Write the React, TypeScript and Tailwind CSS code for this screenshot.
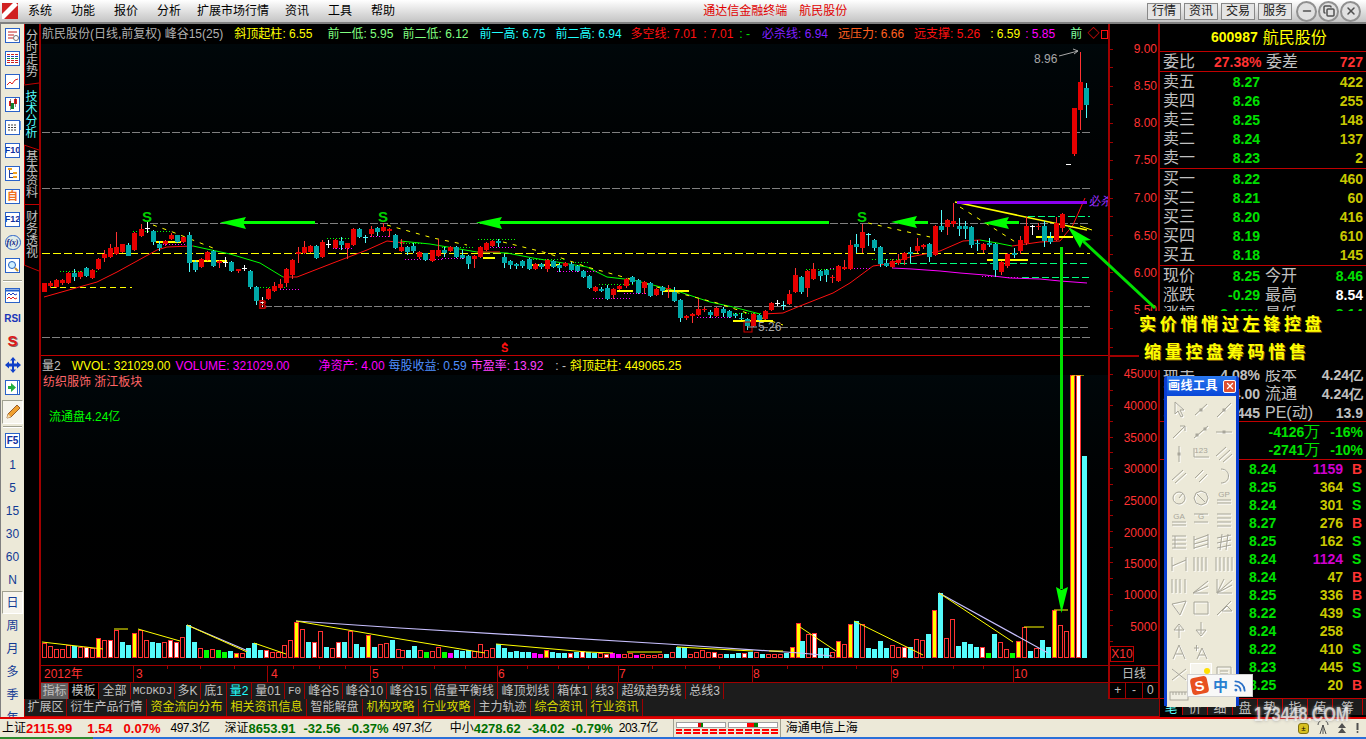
import React from "react";
import { Minus, Copy, X, Rss } from "lucide-react";

// candles: x, body top, body bottom, wick top, wick bottom, kind (0 red, 1 teal, 2 white, 3 cyan cross)
const candles: number[][] = [
  [44,283,292,283,292,0],[50,283,286,281,288,0],[56,280,287,279,288,0],[62,280,283,279,285,0],[68,273,283,272,284,0],
  [74,273,277,269,281,1],[80,272,277,271,279,0],[86,268,276,267,277,1],[92,270,278,269,279,0],[98,259,269,258,270,0],
  [104,254,258,250,262,0],[110,248,257,244,258,0],[116,247,254,232,255,0],[122,244,252,244,253,0],[128,245,256,243,256,1],
  [134,233,250,232,251,0],[141,229,236,224,237,0],[147,228,228,222,233,2],[153,231,242,230,245,1],[159,244,248,241,251,1],
  [165,241,244,240,246,0],[171,235,239,233,240,0],[177,235,242,235,243,1],[183,237,242,237,243,0],[189,235,263,232,272,1],
  [195,262,270,260,272,1],[201,259,267,258,268,0],[207,252,260,251,261,0],[213,251,266,250,267,1],[219,261,263,260,268,0],
  [225,262,262,257,267,2],[231,262,271,261,272,1],[238,269,271,269,273,0],[244,268,268,265,271,2],[250,271,287,270,289,1],
  [256,287,301,286,305,1],[262,302,302,297,307,2],[268,289,299,288,300,0],[274,286,291,282,292,0],[280,284,288,279,289,0],
  [286,269,283,268,287,0],[292,260,275,259,279,0],[298,252,254,247,263,0],[304,247,253,241,254,0],[310,246,252,245,253,0],
  [316,246,258,245,259,1],[322,242,257,240,258,0],[328,244,244,240,248,2],[335,240,248,239,249,0],[341,241,245,237,250,1],
  [347,243,248,243,259,0],[353,229,245,228,246,0],[359,229,237,228,238,1],[365,237,237,235,243,3],[371,229,234,226,237,0],
  [377,228,232,227,236,1],[383,227,231,223,232,0],[389,229,231,228,237,0],[395,235,248,234,249,1],
  [401,247,251,239,252,0],[407,247,252,246,255,1],[413,246,251,243,253,1],[419,252,257,251,259,0],[425,253,260,253,261,1],
  [432,250,261,250,262,0],[438,250,256,239,257,0],[444,250,253,247,257,1],[450,247,251,246,252,0],[456,247,257,246,258,1],
  [462,255,258,250,259,1],[468,256,264,255,269,1],[474,256,259,255,268,0],[480,247,257,246,258,0],[486,243,250,242,251,0],
  [492,241,246,240,247,0],[498,241,243,239,247,1],[504,257,263,254,268,1],[510,261,265,260,269,1],[516,264,266,263,269,1],
  [522,261,266,260,268,1],[529,259,269,258,270,1],[535,264,269,263,270,0],[541,264,267,263,269,1],[547,260,269,259,272,0],
  [553,261,267,260,268,1],[559,265,268,263,272,1],[565,263,266,262,267,0],[571,264,270,262,271,1],[577,266,271,265,272,1],
  [583,271,277,270,278,1],[589,276,288,275,289,1],[595,287,291,286,292,0],[601,289,291,287,292,1],[607,288,299,285,300,1],
  [613,289,295,288,299,0],[619,286,289,285,290,0],[626,279,286,278,288,0],[632,277,282,276,284,1],[638,280,293,279,294,1],
  [644,282,288,281,294,0],[650,283,296,282,297,1],[656,289,295,288,296,0],[662,287,291,286,295,1],[668,288,288,285,298,0],
  [674,292,301,287,302,1],[680,300,318,299,322,1],[686,316,318,315,320,0],[692,314,316,313,323,0],[698,309,315,299,316,0],
  [704,309,309,307,312,0],[710,312,315,310,318,1],[716,308,316,307,317,0],[723,309,313,307,317,1],[729,311,317,310,318,1],
  [735,314,316,313,318,1],[741,318,318,313,320,1],[747,319,326,318,330,1],[753,314,326,313,327,0],[759,315,320,314,321,1],
  [765,311,319,310,320,0],[771,303,310,302,311,0],[777,303,303,300,306,2],[783,305,305,301,310,3],[789,294,304,290,305,0],
  [795,275,292,268,293,0],[801,277,292,276,294,1],[807,271,288,270,297,0],[813,269,279,263,280,0],[820,271,276,270,281,1],
  [826,270,275,269,282,1],[832,277,277,275,283,0],[838,266,281,265,282,0],[844,267,269,260,270,0],[850,245,269,240,270,0],
  [856,244,247,234,253,1],[862,232,248,224,253,0],[868,234,234,233,246,3],[874,240,248,239,251,1],[880,247,264,246,267,1],
  [886,263,266,259,267,1],[892,261,267,259,268,0],[898,260,263,254,265,0],[904,253,260,252,265,0],[910,252,254,247,263,1],
  [917,246,251,238,253,0],[923,245,247,244,249,0],[929,244,257,243,262,1],[935,226,255,225,256,0],[941,226,230,210,232,1],
  [947,220,227,219,235,0],[953,221,224,203,227,0],[959,226,229,218,236,1],[965,226,229,221,239,1],[971,227,245,226,248,1],
  [977,243,244,240,251,1],[983,244,250,243,253,0],[989,243,245,238,247,1],[995,244,270,243,277,1],[1001,262,272,261,275,0],
  [1007,254,266,253,268,0],[1014,253,255,248,258,1],[1020,240,251,236,254,0],[1026,226,243,217,245,0],[1032,226,226,225,235,2],
  [1038,226,227,223,230,0],[1044,226,241,221,247,1],[1050,238,242,232,244,1],[1056,223,240,217,241,0],[1062,214,228,213,232,0],
  [1068,164,164,164,164,2],[1074,108,154,108,156,0],[1080,82,110,52,130,0],[1086,88,105,83,118,1],
];

const volumes: [number, string][] = [
  [42, "R15 R12 R9 R9 R13 C12 R11 W11 R10 Y20 R18 W18 R28 C16 C13 Y25 R28 R18 C16 C15 R16 W18 W16 R21 C33 C16 R10 G8 R9 G8 G6 C7 Y5 R5 C10 C15 C8 W8 R6 R6 R13 R18 Y36 R29 C16 W16 R27 C11 R10 W16 C16 R27 C14 C11 Y23 C11 R14 R15 C18 R9"],
  [400, "R8 C8 C12 R8 G6 R7 R11 G6 M5 C8 C7 C8 R7 R14 R8 R10 C14 C10 C6 C7 C6 C6 M5 M4 Y8 C6 C5 C5 W5 C6 W7 C6 C5 R5 W4 M5 M4 R4 R5 M3 R4 R3 R3 R4 C4 R6 C11 C11 R4 R6 R8 R6 W6 R4 C4 C4 C5 W5 C6 R6 C4 R4 R4 R4 C5 Y11 Y35"],
  [800, "C17 R24 W25 C10 C10 R6 Y17 R14 Y34 C37 R34 C10 C9 C17 C10 R13 R11 W11 C11 R19 R18 C24 Y48 C65 R20 R39 C12 C16 C14 C11 W11 G5 C24 R16 R9 G5 Y17 R31 C7 R10 C18 C11 Y48 R33 R27 Y283 W283 C202"],
];

// x1,x2,y of the short dotted support lines, green then magenta
const greenDots = [[133,172,231],[327,353,238],[60,97,271],[260,287,287],[400,423,243],[442,473,247],[478,517,239],[533,565,259],[575,590,262],[599,633,284],[733,763,313],[806,837,269],[872,907,259]];
const pinkDots = [[163,187,244],[333,353,248],[370,390,236],[280,299,289],[405,443,259],[442,475,258],[490,517,247],[557,597,271],[593,632,298],[624,647,293],[697,733,317],[830,870,268],[982,993,276],[1005,1020,277]];
const thickYellow = [[156,181,241],[483,495,257],[532,560,264],[617,633,290],[663,689,290],[733,773,320],[192,227,260],[987,1028,259],[1036,1073,236]];

const menu: [string, number][] = [["系统",0],["功能",19],["报价",19],["分析",19],["扩展市场行情",16],["资讯",16],["工具",19],["帮助",19]];

const indicatorTabs: [string, number, string?][] = [
  ["指标",28,"sel"],["模板",30,"blk"],["全部",32],["MCDKDJ",44,"mono"],["多K",26],["底1",26],["量2",25,"cy"],["量01",33],["F0",20,"mono"],["峰谷5",38],["峰谷10",44],["峰谷15",44],["倍量平衡线",67],["峰顶划线",56],["箱体1",38],["线3",26],["超级趋势线",68],["总线3",38],
];
const bottomTabs: [string, number, boolean][] = [
  ["扩展区",43,false],["衍生产品行情",80,false],["资金流向分布",80,true],["相关资讯信息",80,true],["智能解盘",56,false],["机构攻略",56,true],["行业攻略",56,true],["主力轨迹",56,false],["综合资讯",56,true],["行业资讯",56,true],
];

const asks = [["卖五","8.27","422"],["卖四","8.26","255"],["卖三","8.25","148"],["卖二","8.24","137"],["卖一","8.23","2"]];
const bids = [["买一","8.22","460"],["买二","8.21","60"],["买三","8.20","416"],["买四","8.19","610"],["买五","8.18","145"]];
const ticks = [["8.24","1159","B"],["8.25","364","S"],["8.24","301","S"],["8.27","276","B"],["8.25","162","S"],["8.24","1124","S"],["8.24","47","B"],["8.25","336","B"],["8.22","439","S"],["8.24","258",""],["8.22","410","S"],["8.23","445","S"],["8.25","20","B"]];

const NUM = "font-['Liberation_Sans',sans-serif] font-bold text-[14px] leading-none";

function Candles() {
  return (
    <>
      {candles.map(([x, t, b, h, l, k], i) => {
        const body = k === 0 ? "#e60000" : k === 1 ? "#00a8a8" : k === 2 ? "#ffffff" : "#54fcfc";
        const wick = k === 0 ? "#ff3232" : k === 1 ? "#54fcfc" : body;
        return (
          <g key={i}>
            <rect x={x} y={h} width={1} height={Math.max(l - h, 1)} fill={wick} />
            <rect x={x - 2} y={t} width={5} height={Math.max(b - t, 1)} fill={body} />
          </g>
        );
      })}
    </>
  );
}

function PriceChart() {
  return (
    <svg width={1067} height={311} viewBox="41 44 1067 311" shapeRendering="crispEdges" className="block">
      {[132, 188].map((y) => <line key={y} x1={42} x2={1090} y1={y + 0.5} y2={y + 0.5} stroke="#808080" strokeDasharray="8 2" />)}
      <line x1={150} x2={1090} y1={223.5} y2={223.5} stroke="#808080" strokeDasharray="8 2" />
      <line x1={264} x2={1090} y1={306.5} y2={306.5} stroke="#808080" strokeDasharray="8 2" />
      <line x1={760} x2={1090} y1={327.5} y2={327.5} stroke="#808080" strokeDasharray="8 2" />
      <line x1={42} x2={1090} y1={337.5} y2={337.5} stroke="#808080" strokeDasharray="8 2" />
      <line x1={50} x2={132} y1={287.5} y2={287.5} stroke="#ffff00" strokeDasharray="6 4" />
      <line x1={42} x2={1090} y1={253.5} y2={253.5} stroke="#ffff00" strokeDasharray="8 3" />
      <line x1={890} x2={1090} y1={263.5} y2={263.5} stroke="#00ff80" strokeDasharray="7 3" />
      <line x1={1022} x2={1090} y1={277.5} y2={277.5} stroke="#00ff80" strokeDasharray="7 3" />
      <line x1={1028} x2={1090} y1={216.5} y2={216.5} stroke="#00ff80" strokeDasharray="7 3" />

      <g fill="none" shapeRendering="auto">
        <polyline points="44,297 97,282 117,272 157,250 167,247 193,246" stroke="#ff1010" />
        <polyline points="193,246 230,254 260,263 283,277" stroke="#00ff00" />
        <polyline points="283,277 297,277 333,263 367,250 387,241 405,243" stroke="#ff1010" />
        <polyline points="400,241 430,244 477,252 507,253 533,258 587,267 607,277 633,280 653,285 680,292 710,302 733,307 760,314" stroke="#00ff00" />
        <polyline points="477,252 500,252" stroke="#ff1010" />
        <polyline points="763,314 783,313 800,306 833,293 850,283 873,266 887,264 910,257 940,251 963,241 980,240" stroke="#ff1010" />
        <polyline points="980,240 997,243 1012,246" stroke="#00ff00" />
        <polyline points="1012,246 1040,242 1060,241 1073,225 1085,198" stroke="#ff1010" />
        <polyline points="892,268 912,269 940,271 960,273 985,275 1010,278 1040,279 1060,281 1087,283" stroke="#ff00ff" />
        <polyline points="153,225 170,231 213,248" stroke="#ffff00" strokeDasharray="4 6" />
        <polyline points="387,225 433,238 467,245" stroke="#ffff00" strokeDasharray="4 6" />
        <polyline points="503,242 547,253 587,267 627,278 667,290 717,303 783,325" stroke="#ffff00" strokeDasharray="4 6" />
        <polyline points="868,223 930,237" stroke="#ffff00" strokeDasharray="4 6" />
        <polyline points="960,207 1017,243" stroke="#ffff00" strokeDasharray="4 6" />
        <polyline points="955,202 1087,230" stroke="#ffff00" strokeWidth={1.5} />
        <polyline points="1080,226 1092,230" stroke="#ffff00" />
      </g>

      {greenDots.map(([a, b, y], i) => <line key={i} x1={a} x2={b} y1={y + 0.5} y2={y + 0.5} stroke="#00ff00" strokeDasharray="1 2" />)}
      {pinkDots.map(([a, b, y], i) => <line key={i} x1={a} x2={b} y1={y + 0.5} y2={y + 0.5} stroke="#ff00ff" strokeDasharray="1 2" />)}
      {thickYellow.map(([a, b, y], i) => <rect key={i} x={a} y={y} width={b - a} height={2} fill="#ffff00" />)}
      <rect x={957} y={201} width={130} height={3} fill="#8a00f0" />

      <Candles />

      <g className="font-['Liberation_Sans',sans-serif] font-bold" fontSize={15} fill="#00d000" shapeRendering="auto">
        <text x={142} y={222}>S</text>
        <text x={378} y={222}>S</text>
        <text x={857} y={222}>S</text>
      </g>
      <g className="font-['Liberation_Sans',sans-serif]" fontSize={12} shapeRendering="auto">
        <text x={258} y={309} fill="#c00000" fontWeight="bold">B</text>
        <rect x={744} y={322} width={8} height={10} fill="none" stroke="#d00000" />
        <text x={758} y={331} fill="#a8a8a8">5.26</text>
        <line x1={747} x2={757} y1={327} y2={327} stroke="#a8a8a8" />
        <text x={1034} y={63} fill="#a8a8a8">8.96</text>
        <path d="M1059 56 L1078 51 M1073 49 L1078 51 L1074 54" fill="none" stroke="#a8a8a8" />
        <text x={501} y={352} fill="#ff1010" fontWeight="bold" fontSize={11}>S</text>
        <path d="M505 342 l-3 3 h6 z" fill="#ff1010" />
        <text x={1089} y={205} fill="#9a30ff" fontSize={12}>必杀线</text>
      </g>
    </svg>
  );
}

function VolumeChart() {
  const bars: React.ReactElement[] = [];
  volumes.forEach(([start, list]) => {
    list.split(" ").forEach((v, i) => {
      const k = v[0];
      const h = Number(v.slice(1));
      const x = start + 6 * i;
      const y = 658 - h;
      if (k === "C" || k === "G" || k === "M") {
        bars.push(<rect key={`${start}${i}`} x={x} y={y} width={5} height={h} fill={k === "C" ? "#54fcfc" : k === "G" ? "#00ff00" : "#ff00ff"} />);
      } else {
        const fill = k === "Y" ? "#ffff00" : k === "W" ? "#ffffff" : "none";
        bars.push(<rect key={`${start}${i}`} x={x + 0.5} y={y + 0.5} width={4} height={h - 1} fill={fill} stroke="#ff3232" />);
      }
    });
  });
  const yellow = ["42,642 103,649","114,629 128,629","138,629 180,641","187,625 247,652","254,643 286,654","296,621 400,639 485,653","496,644 587,652 613,653","627,652 662,652","677,647 753,651","769,651 783,651","800,627 836,651","854,621 923,655","939,593 1013,642","1024,627 1044,627","1054,610 1068,610","1072,375 1084,375"];
  const lavender = ["187,625 248,651","296,621 400,628 667,644 800,653 832,656","939,593 1048,653"];
  const fullTicks = [133, 267, 370, 497, 618, 752, 891, 1013];
  const smallTicks = [167, 200, 234, 293, 319, 345, 402, 434, 465, 527, 558, 588, 652, 685, 719, 787, 822, 856, 922, 953, 983];
  const months: [string, number][] = [["3",136],["4",271],["5",372],["6",498],["7",619],["8",753],["9",892],["10",1014]];
  return (
    <svg width={1067} height={307} viewBox="41 375 1067 307" shapeRendering="crispEdges" className="block">
      {bars}
      <g fill="none" shapeRendering="auto">
        {lavender.map((p) => <polyline key={p} points={p} stroke="#c8c0ff" strokeWidth={1.2} />)}
        {yellow.map((p) => <polyline key={p} points={p} stroke="#ffff00" />)}
      </g>
      <rect x={41} y={665} width={1067} height={1} fill="#a00000" />
      {fullTicks.map((x) => <rect key={x} x={x} y={666} width={1} height={16} fill="#a00000" />)}
      {smallTicks.map((x) => <rect key={x} x={x} y={666} width={1} height={3} fill="#a00000" />)}
      <g className="font-['Liberation_Sans','Noto_Sans_CJK_SC',sans-serif]" fontSize={12} shapeRendering="auto">
        <text x={44} y={678} fill="#ff3232">2012年</text>
        {months.map(([m, x]) => <text key={m} x={x} y={678} fill="#ff3232">{m}</text>)}
        <text x={43} y={386} fill="#ff6464">纺织服饰 浙江板块</text>
        <text x={49} y={421} fill="#00ff00">流通盘4.24亿</text>
      </g>
    </svg>
  );
}

function PriceAxis() {
  const priceLabels: [string, number][] = [["9.00",48.5],["8.50",85.7],["8.00",122.7],["7.50",160],["7.00",197.7],["6.50",235.7],["6.00",272.5],["5.50",310]];
  const volLabels: [string, number][] = [["45000",374],["40000",406],["35000",438],["30000",469],["25000",501],["20000",533],["15000",564],["10000",595],["5000",627]];
  const ticks: number[] = [];
  for (let y = 48.5; y < 354; y += 18.65) ticks.push(Math.round(y));
  const vTicks: number[] = [];
  for (let y = 374; y < 650; y += 15.7) vTicks.push(Math.round(y));
  return (
    <svg width={50} height={641} viewBox="1108 24 50 641" shapeRendering="crispEdges" className="block">
      <rect x={1108} y={24} width={2} height={641} fill="#a00000" />
      {ticks.map((y) => <rect key={y} x={1108} y={y} width={5} height={1} fill="#a00000" />)}
      {vTicks.map((y) => <rect key={y} x={1108} y={y} width={5} height={1} fill="#a00000" />)}
      <rect x={1108} y={355} width={50} height={1} fill="#c00000" />
      <rect x={1108} y={355} width={32} height={2} fill="#a00000" />
      <g className="font-['Liberation_Sans',sans-serif]" fontSize={12} fill="#ff3232" textAnchor="end" shapeRendering="auto">
        {priceLabels.map(([t, y]) => <text key={t} x={1157} y={y + 4}>{t}</text>)}
        {volLabels.map(([t, y]) => <text key={t} x={1157} y={y + 4}>{t}</text>)}
        <text x={1122} y={658} textAnchor="middle" fontSize={12}>X10</text>
      </g>
      <rect x={1110.5} y={646.5} width={23} height={15} fill="none" stroke="#c00000" />
    </svg>
  );
}

function Legend({ label, value, color, className }: { label: string; value: string; color: string; className?: string }) {
  return (
    <span className={`whitespace-pre ${className ?? ""}`} style={{ color }}>
      {label}: {value}
    </span>
  );
}

// left toolbar icon box with a blue frame
function Box({ children, className }: { children?: React.ReactNode; className?: string }) {
  return (
    <div className={`w-[15px] h-[15px] border border-[#2a62c8] bg-white flex items-center justify-center overflow-hidden text-[9px] font-bold leading-none text-[#1030a0] ${className ?? ""}`}>
      {children}
    </div>
  );
}

function LeftBar() {
  const slot = "h-[23px] flex items-center justify-center shrink-0";
  const period = "h-[23px] flex items-center justify-center shrink-0 text-[#123a94] text-[12px]";
  return (
    <div className="w-[24px] shrink-0 bg-[#ece9d8] border-l border-[#808080] flex flex-col overflow-hidden">
      <div className={slot}>
        <Box><svg width={13} height={13}><path d="M2 3h9M2 6h6M2 9h5" stroke="#c02020" /><circle cx={10} cy={9} r={2.5} fill="none" stroke="#707070" /></svg></Box>
      </div>
      <div className={slot}>
        <Box><svg width={13} height={13} shapeRendering="crispEdges"><path d="M1 2h11M1 10h11" stroke="#d02020" strokeDasharray="3 1" /><path d="M1 4h11" stroke="#2040c0" strokeDasharray="3 1" /><path d="M1 6h11" stroke="#108040" strokeDasharray="3 1" /><path d="M1 8h11" stroke="#d02020" strokeDasharray="3 1" /></svg></Box>
      </div>
      <div className={slot}>
        <Box><svg width={13} height={13}><path d="M1 10l3-3 2 2 3-4 3-1" fill="none" stroke="#e02020" /></svg></Box>
      </div>
      <div className={slot}>
        <Box><svg width={13} height={13} shapeRendering="crispEdges"><path d="M3 3h2v5h-2zM8 1h3v5h-3z" fill="#e02020" /><path d="M5 5h3v6h-3z" fill="#108030" /><path d="M4 1v11M9.500 0v9" stroke="#222" strokeWidth={0.5} /></svg></Box>
      </div>
      <div className={slot}>
        <div className="relative w-[16px] h-[14px]">
          <div className="absolute right-0 top-0 w-[13px] h-[9px] border border-[#6090e0] bg-[#a0c0f0]" />
          <Box className="absolute left-0 bottom-0 w-[13px] h-[11px]"><svg width={11} height={9}><path d="M1 2h9M1 4.500h9M1 7h9" stroke="#404040" strokeDasharray="2 1" /></svg></Box>
        </div>
      </div>
      <div className={slot}><Box>F10</Box></div>
      <div className={slot}>
        <Box><svg width={13} height={13} shapeRendering="crispEdges"><path d="M2 1h4v2h-4zM7 5h4v2h-4zM7 9h4v2h-4z" fill="#f0a020" /><path d="M3 3v7h4M3 6h4" fill="none" stroke="#2040a0" /></svg></Box>
      </div>
      <div className={slot}><Box className="text-[#f07020] text-[11px]">自</Box></div>
      <div className={slot}><Box>F12</Box></div>
      <div className={slot}><div className="w-[16px] h-[15px] rounded-full border border-[#2a62c8] bg-[#e0ece8] flex items-center justify-center text-[8px] italic font-bold text-[#102080] font-['Liberation_Serif',serif]">f(x)</div></div>
      <div className={slot}>
        <Box><svg width={13} height={13}><circle cx={6} cy={6} r={3.5} fill="#d0f0ff" stroke="#2060c0" /><path d="M9 9l3 3" stroke="#c09030" strokeWidth={2} /></svg></Box>
      </div>
      <div className="h-[7px] flex items-center justify-center shrink-0"><div className="w-[19px] border-t border-[#a0a090] border-b-white border-b h-[2px]" /></div>
      <div className={slot}>
        <Box><svg width={13} height={13}><path d="M0 1.500h13" stroke="#2060d0" strokeWidth={2} /><path d="M1 6l2-2 2 2 2-2 2 2 2-1" fill="none" stroke="#2040c0" /><path d="M1 10l2-2 2 2 2-2 2 2 2-1" fill="none" stroke="#e02020" /></svg></Box>
      </div>
      <div className={`${slot} text-[#1834b8] text-[10px] font-bold font-['Liberation_Sans',sans-serif]`}>RSI</div>
      <div className={`${slot} text-[#e01818] text-[15px] font-bold font-['Liberation_Sans',sans-serif] [text-shadow:1px_1px_0_#806060]`}>S</div>
      <div className={slot}>
        <svg width={16} height={16} viewBox="0 0 16 16"><path d="M8 0l3 3.500h-2v3h3v-2l4 3.500-4 3.500v-2h-3v3h2l-3 3.500-3-3.500h2v-3h-3v2l-4-3.500 4-3.500v2h3v-3h-2z" fill="#1040c8" /></svg>
      </div>
      <div className={slot}>
        <Box><svg width={13} height={13}><path d="M2 5h3v-3l5 4.500-5 4.500v-3h-3z" fill="#20b040" /><path d="M11.500 0v13" stroke="#2a62c8" /></svg></Box>
      </div>
      <div className="h-[24px] mt-[1px] mx-[1px] flex items-center justify-center shrink-0 bg-[#f6f4ec] border border-t-[#a0a090] border-l-[#a0a090] border-b-white border-r-white">
        <svg width={16} height={16} viewBox="0 0 16 16"><path d="M12 1l3 3-9 9-4 1 1-4z" fill="#f0a030" stroke="#804010" strokeWidth={0.8} /><path d="M2 14l1-4 3 3z" fill="#f8e0b0" /></svg>
      </div>
      <div className="h-[5px] flex items-center justify-center shrink-0"><div className="w-[19px] border-t border-[#a0a090] border-b-white border-b h-[2px]" /></div>
      <div className={slot}><Box className="text-[10px]">F5</Box></div>
      <div className="h-[1px] shrink-0" />
      {["1", "5", "15", "30", "60", "N"].map((p) => <div key={p} className={`${period} font-['Liberation_Sans',sans-serif]`}>{p}</div>)}
      <div className="h-[23px] mx-[1px] flex items-center justify-center shrink-0 bg-[#f6f4ec] border border-t-[#a0a090] border-l-[#a0a090] border-b-white border-r-white text-[#123a94] text-[12px]">日</div>
      {["周", "月", "多", "季", "年"].map((p) => <div key={p} className={period}>{p}</div>)}
    </div>
  );
}

function TabStrip() {
  const tabs: [string, number, string][] = [
    ["分时走势", 60, "text-[#c0c0c0] border-l"],
    ["技术分析", 61, "text-[#54fcfc]"],
    ["基本资料", 60, "text-[#c0c0c0] border-l border-b"],
    ["财务透视", 60, "text-[#c0c0c0] border-l"],
  ];
  return (
    <div className="relative w-[17px] shrink-0 bg-black border-r-2 border-[#a00000] flex flex-col">
      {tabs.map(([t, h, cls]) => (
        <div key={t} style={{ height: h }} className={`flex flex-col items-center justify-center shrink-0 text-[12px] leading-[12px] border-[#c00000] ${cls}`}>
          {t.split("").map((c, j) => <span key={j}>{c}</span>)}
        </div>
      ))}
      {/* chamfered corners of the tabs */}
      <svg width={17} height={260} className="absolute left-0 top-0 pointer-events-none">
        <path d="M0 61L15 59M0 121L15 126M0 241L15 247" fill="none" stroke="#c00000" />
      </svg>
    </div>
  );
}

function ToolIcon({ d, label, dots }: { d?: string; label?: string; dots?: number[][] }) {
  return (
    <svg width={20} height={20} viewBox="0 0 20 20" className="block">
      <g fill="none">
        {d && <path d={d} stroke="#ffffff" transform="translate(1 1)" />}
        {d && <path d={d} stroke="#a8a69a" />}
        {dots?.map(([x, y], i) => <rect key={i} x={x - 1.5} y={y - 1.5} width={3} height={3} fill="#a8a69a" />)}
      </g>
      {label && <text x={10} y={9} textAnchor="middle" fontSize={8} fill="#a8a69a" className="font-['Liberation_Sans',sans-serif]">{label}</text>}
    </svg>
  );
}

const toolRows: { d?: string; label?: string; dots?: number[][] }[][] = [
  [{ d: "M6 2v12l3-3 3 6 2-1-3-6h4z" }, { d: "M4 15L16 4", dots: [[10, 10]] }, { d: "M3 17L17 3", dots: [[10, 10]] }],
  [{ d: "M4 16L16 4M11 4h5v5" }, { d: "M3 16L17 4", dots: [[6, 13], [14, 7]] }, { d: "M2 10h16", dots: [[10, 10]] }],
  [{ d: "M10 2v16", dots: [[10, 10]] }, { d: "M3 13h15M3 4v9", label: "123" }, { d: "M2 12L12 3M5 16L16 6M9 18L18 10" }],
  [{ d: "M3 14L14 4M6 17L17 7" }, { d: "M4 12L12 4M8 16L16 8" }, { d: "M7 3c10 0 10 14 0 14" }],
  [{ d: "M16 10a6 6 0 1 1-12 0 6 6 0 1 1 12 0M10 10L14 5" }, { d: "M5 5l5-2 5 2 2 5-2 5-5 2-5-2-2-5zM6 6l8 8" }, { d: "M3 12h14M3 15h14", label: "GP" }],
  [{ d: "M3 12h14M3 15h14", label: "GA" }, { d: "M3 4h14M3 12h14", label: "G" }, { d: "M3 4h14M3 8h14M3 12h14M3 16h14" }],
  [{ d: "M3 4h14M3 8h14M3 12h14M3 16h14M6 4v12" }, { d: "M3 4v13M17 2v14M3 8L17 3M3 12L17 8M3 16L17 12" }, { d: "M3 6L17 3M3 11L17 8M3 16L17 13M8 2l-2 16M14 2l-2 16" }],
  [{ d: "M3 3v14M17 3v14M3 12L17 6" }, { d: "M3 3v14M7 3v14M11 3v14M15 3v14" }, { d: "M2 3v14M6 3v14M10 3v14M14 3v14M18 3v14" }],
  [{ d: "M3 3v14M7 3v14M11 3v14M16 3v14" }, { d: "M2 17L17 5M2 17L17 10M2 17h15" }, { d: "M3 3v14h15M3 17L18 4M3 17L18 9M3 17L10 3" }],
  [{ d: "M3 6L17 3 11 17z" }, { d: "M3 4h14v12H3z" }, { d: "M3 17L17 3M8 13h10l-5-5z" }],
  [{ d: "M10 18V6M5 10l5-6 5 6z" }, { d: "M10 2v12M5 10l5 6 5-6z" }, {}],
  [{ d: "M4 17l6-14 6 14M6.500 12h7" }, { d: "M6 17l5-11 5 11M8 13h6M3 6h5M5.500 3v6" }, {}],
  [{ d: "M3 5l14 11M17 5L3 16" }, {}, { d: "M3 3h14v14H3zM6 7h8M6 10h8M6 13h8" }],
];

function DrawingTools() {
  return (
    <div className="absolute left-[1164px] top-[376px] w-[75px] h-[330px] z-30 bg-[#0a3ed0] rounded-t-[3px] border-[3px] border-t-0 border-[#0a3ed0] flex flex-col">
      <div className="h-[20px] flex items-center justify-between shrink-0 pl-[1px] bg-linear-to-b from-[#2a78f0] to-[#0a46d8]">
        <span className="text-white text-[12px] font-bold leading-none tracking-[0.5px]">画线工具</span>
        <span className="w-[13px] h-[13px] bg-[#e05030] border border-white rounded-[2px] flex items-center justify-center"><X size={10} color="white" strokeWidth={3} /></span>
      </div>
      <div className="bg-[#ece9d8] flex-1 grid grid-cols-3 auto-rows-[22px] justify-items-center items-center px-[1px] pt-[3px]">
        {toolRows.flat().map((t, i) =>
          i === 37 ? (
            <div key={i} className="relative w-[22px] h-[22px] bg-[#f6f4ec] border border-white">
              <span className="absolute right-[1px] top-[4px] w-[6px] h-[6px] rounded-full bg-[#ffe000]" />
            </div>
          ) : (
            <ToolIcon key={i} {...t} />
          )
        )}
        <svg width={20} height={14}><rect x={1} y={3} width={18} height={8} fill="#f0eee2" stroke="#a8a69a" /><path d="M4 3v3M7 3v3M10 3v3M13 3v3M16 3v3" stroke="#a8a69a" /></svg>
      </div>
    </div>
  );
}

function StatRow({ a, b, c, d, bColor, dColor }: { a: string; b: string; c: string; d: string; bColor: string; dColor: string }) {
  return (
    <div className="h-[19px] flex items-center px-[3px]">
      <span className="text-[#c0c0c0] text-[16px] leading-none w-[32px]">{a}</span>
      <span className={`${NUM} ${bColor} w-[65px] text-right`}>{b}</span>
      <span className="text-[#c0c0c0] text-[16px] leading-none ml-[5px] whitespace-nowrap">{c}</span>
      <span className={`${NUM} ${dColor} ml-auto`}>{d}</span>
    </div>
  );
}

function SidePanel() {
  const label = "text-[#c0c0c0] text-[16px] leading-none";
  const priceRow = (r: string[], i: number) => (
    <div key={i} className="h-[19px] flex items-center pl-[3px] pr-[3px]">
      <span className={`${label} w-[51px]`}>{r[0]}</span>
      <span className={`${NUM} text-[#00e000] w-[46px] text-right`}>{r[1]}</span>
      <span className={`${NUM} text-[#c8c800] ml-auto`}>{r[2]}</span>
    </div>
  );
  return (
    <div className="w-[207px] shrink-0 bg-black flex flex-col border-l border-[#a00000]">
      <div className="h-[28px] shrink-0 border-b border-[#c00000] flex items-center pl-[51px] text-[#ffff00]">
        <span className="font-['Liberation_Sans',sans-serif] font-bold text-[14px] mr-[5px]">600987</span>
        <span className="text-[16px]">航民股份</span>
      </div>
      <div className="h-[20px] shrink-0 border-b border-[#c00000] flex items-center px-[3px]">
        <span className={`${label} w-[51px]`}>委比</span>
        <span className={`${NUM} text-[#ff3232] w-[50px]`}>27.38%</span>
        <span className={`${label} ml-[2px]`}>委差</span>
        <span className={`${NUM} text-[#ff3232] ml-auto`}>727</span>
      </div>
      <div className="h-[97px] shrink-0 border-b border-[#c00000]">{asks.map(priceRow)}</div>
      <div className="h-[97px] shrink-0 border-b border-[#c00000]">{bids.map(priceRow)}</div>
      <div className="h-[57px] shrink-0">
        <StatRow a="现价" b="8.25" c="今开" d="8.46" bColor="text-[#00e000]" dColor="text-[#00e000]" />
        <StatRow a="涨跌" b="-0.29" c="最高" d="8.54" bColor="text-[#00e000]" dColor="text-white" />
        <StatRow a="涨幅" b="-3.40%" c="最低" d="8.14" bColor="text-[#00e000]" dColor="text-[#00e000]" />
      </div>
      <div className="h-[42px] shrink-0" />
      <div className="h-[57px] shrink-0 border-b border-[#c00000]">
        <StatRow a="换手" b="4.08%" c="股本" d="4.24亿" bColor="text-[#c0c0c0]" dColor="text-[#c0c0c0]" />
        <StatRow a="净资" b="4.00" c="流通" d="4.24亿" bColor="text-[#c0c0c0]" dColor="text-[#c0c0c0]" />
        <StatRow a="收益" b=".445" c="PE(动)" d="13.9" bColor="text-[#c0c0c0]" dColor="text-[#c0c0c0]" />
      </div>
      <div className="h-[38px] shrink-0 border-b border-[#c00000] text-[#00e000]">
        <div className={`h-[19px] flex items-center justify-end pr-[3px] gap-[10px] ${NUM}`}><span>-4126<span className="font-normal text-[16px]">万</span></span><span>-16%</span></div>
        <div className={`h-[18px] flex items-center justify-end pr-[3px] gap-[10px] ${NUM}`}><span>-2741<span className="font-normal text-[16px]">万</span></span><span>-10%</span></div>
      </div>
      <div className="h-[238px] shrink-0">
        {ticks.map(([p, v, f], i) => (
          <div key={i} className="h-[18px] flex items-center">
            <span className={`${NUM} text-[#00e000] ml-[89px] w-[30px]`}>{p}</span>
            <span className={`${NUM} ${v === "1159" || v === "1124" ? "text-[#d000d0]" : "text-[#c8c800]"} w-[64px] text-right`}>{v}</span>
            <span className={`${NUM} ml-[9px] ${f === "B" ? "text-[#ff3232]" : "text-[#00e000]"}`}>{f}</span>
          </div>
        ))}
      </div>
      <div className="h-[17px] shrink-0 flex bg-[#1c1c1c] border-t border-[#c00000] text-[#c0c0c0] text-[13px] leading-[18px] overflow-hidden">
        {(["笔", "价", "细", "盘", "势", "指", "值", "筹"]).map((t, i) => (
          <span key={t} style={{ width: i === 0 ? 23 : i === 7 ? 30 : 25 }} className={`text-center border-r border-[#c00000] ${i === 0 ? "text-[#54fcfc] bg-black" : ""}`}>{t}</span>
        ))}
      </div>
    </div>
  );
}

function MeterBlock({ fill }: { fill: React.ReactNode }) {
  return (
    <div className="w-[50px] flex flex-col gap-[1px]">
      <div className="relative h-[6px] border border-[#a0a0a0] bg-white flex justify-center">{fill}</div>
      <div className="h-[5px] flex gap-[2px]">
        {[0, 1, 2, 3, 4, 5].map((i) => (
          <div key={i} className="flex-1 flex flex-col gap-[1px]"><div className="h-[2px] bg-[#ff0000]" /><div className="h-[2px] bg-[#ff0000]" /></div>
        ))}
      </div>
    </div>
  );
}

function StatusBar() {
  const idx = "font-['Liberation_Sans',sans-serif] font-bold text-[13px] leading-none";
  const cn = "text-black text-[12px] leading-none whitespace-nowrap";
  const amount = "text-black text-[12px] tracking-[-0.5px] leading-none whitespace-nowrap";
  return (
    <div className="h-[22px] shrink-0 bg-[#ece9d8] border-t-2 border-[#e00000] border-b-2 border-b-[#2a70d8] flex items-center pl-[2px] relative">
      <span className="absolute left-0 bottom-[-2px] w-[93px] h-[2px] bg-[#2e8b2e]" />
      <span className={cn}>上证</span>
      <span className={`${idx} text-[#f00000]`}>2115.99</span>
      <span className={`${idx} text-[#f00000] ml-[15px]`}>1.54</span>
      <span className={`${idx} text-[#f00000] ml-[11px]`}>0.07%</span>
      <span className={`${amount} ml-[10px]`}>497.3亿</span>
      <span className={`${cn} ml-[15px]`}>深证</span>
      <span className={`${idx} text-[#007000]`}>8653.91</span>
      <span className={`${idx} text-[#007000] ml-[8px]`}>-32.56</span>
      <span className={`${idx} text-[#007000] ml-[7px]`}>-0.37%</span>
      <span className={`${amount} ml-[4px]`}>497.3亿</span>
      <span className={`${cn} ml-[18px]`}>中小</span>
      <span className={`${idx} text-[#007000]`}>4278.62</span>
      <span className={`${idx} text-[#007000] ml-[7px]`}>-34.02</span>
      <span className={`${idx} text-[#007000] ml-[7px]`}>-0.79%</span>
      <span className={`${amount} ml-[6px]`}>203.7亿</span>
      <div className="ml-[15px] h-full border-l border-r border-[#a0a090] flex items-center gap-[2px] px-[2px] w-[108px]">
        <MeterBlock fill={<><span className="w-[3px] bg-[#e00000]" /><span className="w-[2px] bg-[#008000]" /></>} />
        <MeterBlock fill={<><span className="w-[7px] bg-[#ff0000]" /><span className="w-[4px] bg-[#008000]" /></>} />
      </div>
      <span className={`${cn} ml-[5px]`}>海通电信上海</span>
      <div className="ml-auto flex items-center gap-[8px] pr-[6px]">
        <span className="w-[11px] h-[11px] rounded-[3px] bg-[#d8c020] border border-[#807010] text-[8px] leading-[9px] text-center">±</span>
        <svg width={12} height={14} viewBox="0 0 12 14"><path d="M6 4v9M3 13l3-9 3 9M1 4a5 5 0 0 1 10 0" fill="none" stroke="#505050" /></svg>
        <svg width={10} height={12} viewBox="0 0 10 12"><path d="M5 1l4 5h-8zM5 6l4 5h-8z" fill="#505050" /></svg>
        <svg width={5} height={12} viewBox="0 0 5 12"><path d="M2.500 1v7" stroke="#505050" strokeWidth={2} /><circle cx={2.500} cy={10} r={1} fill="#505050" /></svg>
      </div>
    </div>
  );
}

function Arrows() {
  return (
    <svg width={1366} height={739} className="absolute left-0 top-0 z-10 pointer-events-none">
      <g fill="#00ff00">
        <rect x={243} y={221} width={72} height={3} />
        <path d="M220 222.500L246 217 243 222.500 246 229z" />
        <rect x={499} y={221} width={330} height={3} />
        <path d="M476 222.500L502 217 499 222.500 502 229z" />
        <rect x={914} y={221} width={14} height={3} />
        <path d="M891 222L917 216 914 222 917 228z" />
        <rect x={1006} y={221} width={13} height={3} />
        <path d="M983 223L1009 217 1006 223 1009 229z" />
        <path d="M1068 227L1091 240 1083 241 1080 248z" />
        <rect x={1060} y={247} width={3} height={342} fill="#00e000" />
        <path d="M1061.500 613L1056 587 1061.500 590 1068 587z" />
      </g>
      <line x1={1083} x2={1155} y1={241} y2={308} stroke="#00e000" strokeWidth={3} />
    </svg>
  );
}

function Annotation() {
  const line = "text-[#ffff00] font-bold text-[17px] leading-none [text-shadow:1px_1px_0_#806000] whitespace-nowrap";
  return (
    <div className="absolute left-[1139px] top-[311px] w-[227px] h-[59px] bg-black z-20 flex flex-col">
      <div className={`${line} tracking-[3.7px] h-[27px] flex items-center`}>实价悄悄过左锋控盘</div>
      <div className={`${line} tracking-[3.7px] h-[29px] flex items-center pl-[5px]`}>缩量控盘筹码惜售</div>
    </div>
  );
}

export default function App() {
  return (
    <div className="relative w-[1366px] h-[739px] overflow-hidden bg-black flex flex-col font-['Liberation_Sans','Noto_Sans_CJK_SC',sans-serif] text-[12px]">
      {/* title / menu bar */}
      <div className="h-[24px] shrink-0 bg-linear-to-b from-white to-[#c4c4c4] border-b-2 border-[#808080] flex items-center">
        <div className="w-[16px] h-[16px] ml-[2px] shrink-0 bg-[#d02020] relative overflow-hidden">
          <span className="absolute left-[4px] top-[-3px] w-[5px] h-[22px] bg-white rotate-45" />
        </div>
        <div className="flex items-center ml-[10px]">
          {menu.map(([m, gap]) => <span key={m} style={{ marginLeft: gap }} className="text-black text-[12px] whitespace-nowrap">{m}</span>)}
        </div>
        <span className="ml-[308px] text-[#e00000] text-[12px]">通达信金融终端</span>
        <span className="ml-[12px] text-[#e00000] text-[12px]">航民股份</span>
        <div className="ml-auto flex items-center gap-[3px] pr-[5px]">
          {["行情", "资讯", "交易", "服务"].map((t) => (
            <span key={t} className="w-[34px] h-[17px] bg-[#e4e4e4] border border-[#888] flex items-center justify-center text-[12px] text-[#202020]">{t}</span>
          ))}
          <div className="flex gap-[1px] ml-[1px]">
            {[Minus, Copy, X].map((I, i) => (
              <span key={i} className="w-[21px] h-[21px] rounded-full border-2 border-[#909090] bg-[#e0e0e0] flex items-center justify-center"><I size={12} color="#505050" strokeWidth={3} /></span>
            ))}
          </div>
        </div>
      </div>

      <div className="flex h-[693px] shrink-0">
        <LeftBar />
        <div className="w-[1135px] shrink-0 flex flex-col">
          <div className="flex h-[675px] shrink-0">
            <TabStrip />
            <div className="w-[1067px] shrink-0 flex flex-col">
              <div className="h-[20px] shrink-0 bg-black flex items-center whitespace-pre overflow-hidden pl-[1px]">
                <span className="text-[#b0b0b0]">航民股份(日线,前复权) 峰谷15(25)</span>
                <Legend label="斜顶起柱" value="6.55" color="#ffff00" className="ml-[11px]" />
                <Legend label="前一低" value="5.95" color="#80ff80" className="ml-[15px]" />
                <Legend label="前二低" value="6.12" color="#80ff80" className="ml-[9px]" />
                <Legend label="前一高" value="6.75" color="#20ffff" className="ml-[11px]" />
                <Legend label="前二高" value="6.94" color="#20ffff" className="ml-[10px]" />
                <Legend label="多空线" value="7.01  : 7.01" color="#ff1010" className="ml-[9px]" />
                <span className="text-[#00e000] ml-[6px]">: -</span>
                <Legend label="必杀线" value="6.94" color="#8020ff" className="ml-[12px]" />
                <Legend label="远压力" value="6.66" color="#ff6020" className="ml-[10px]" />
                <Legend label="远支撑" value="5.26" color="#ff1010" className="ml-[10px]" />
                <span className="text-[#ffff00] ml-[10px]">: 6.59</span>
                <span className="text-[#ff00ff] ml-[5px]">: 5.85</span>
                <span className="text-[#80ffa0] ml-[15px]">前</span>
                <span className="text-[#ff1010] ml-[5px]">◇</span>
                <span className="ml-[2px] w-[10px] h-[9px] border border-[#ff1010]" />
              </div>
              <div className="h-[311px] shrink-0 bg-linear-to-b from-[#00070a] to-black">
                <PriceChart />
              </div>
              <div className="h-[1px] shrink-0 bg-[#c00000]" />
              <div className="h-[19px] shrink-0 bg-black flex items-center whitespace-pre pl-[1px]">
                <span className="text-[#c0c0c0]">量2</span>
                <Legend label="WVOL" value="321029.00" color="#ffff00" className="ml-[11px]" />
                <Legend label="VOLUME" value="321029.00" color="#ff00ff" className="ml-[5px]" />
                <Legend label="净资产" value="4.00" color="#ff00ff" className="ml-[29px]" />
                <Legend label="每股收益" value="0.59" color="#5090ff" className="ml-[4px]" />
                <Legend label="市盈率" value="13.92" color="#ff40ff" className="ml-[4px]" />
                <span className="text-[#c0c0c0] ml-[12px]">: -</span>
                <Legend label="斜顶起柱" value="449065.25" color="#ffff00" className="ml-[4px]" />
              </div>
              <div className="h-[307px] shrink-0 bg-linear-to-b from-[#00070a] to-black">
                <VolumeChart />
              </div>
              <div className="h-[17px] shrink-0 flex bg-[#1c1c1c] border-t border-[#a00000] text-[#c0c0c0] text-[12px] leading-[16px]">
                {indicatorTabs.map(([t, w, k]) => (
                  <span key={t} style={{ width: w }} className={`text-center border-r border-[#a00000] whitespace-nowrap overflow-hidden ${k === "sel" ? "bg-[#606060]" : k === "blk" ? "bg-black" : ""} ${k === "cy" ? "text-[#20ffff]" : ""} ${k === "mono" ? "font-['Liberation_Mono',monospace] text-[11px]" : ""}`}>{t}</span>
                ))}
              </div>
            </div>
            <div className="w-[51px] shrink-0 flex flex-col border-r border-[#a00000]">
              <PriceAxis />
              <div className="h-[17px] shrink-0 border-t border-l-2 border-[#a00000] text-[#c0c0c0] text-[12px] text-center leading-[17px]">日线</div>
              <div className="h-[17px] shrink-0 flex border-t border-b border-l-2 border-[#a00000] text-[#c0c0c0] text-[12px] leading-[15px]">
                <span className="flex-1 text-center border-r border-[#a00000]">+</span>
                <span className="flex-1 text-center border-r border-[#a00000]">-</span>
                <span className="flex-1 text-center">0</span>
              </div>
            </div>
          </div>
          <div className="h-[18px] shrink-0 flex bg-[#1c1c1c] border-b border-[#c00000] text-[12px] leading-[17px]">
            {bottomTabs.map(([t, w, y]) => (
              <span key={t} style={{ width: w }} className={`text-center border-r border-[#a00000] ${y ? "text-[#d8d800]" : "text-[#c0c0c0]"} ${t === "扩展区" ? "border-l" : ""}`}>{t}</span>
            ))}
          </div>
        </div>
        <SidePanel />
      </div>

      <StatusBar />

      <Arrows />
      <Annotation />
      <DrawingTools />

      {/* IME bar */}
      <div className="absolute left-[1187px] top-[674px] w-[66px] h-[23px] z-40 bg-[#f8f8f8] border border-[#d0d0d0] flex items-center gap-[5px] pl-[3px]">
        <span className="w-[17px] h-[17px] rounded-[4px] bg-[#e85020] text-white text-[14px] font-bold flex items-center justify-center leading-none -rotate-12">S</span>
        <span className="text-[#2a80d0] text-[15px] font-bold leading-none">中</span>
        <Rss size={14} color="#2a70c8" strokeWidth={3} />
      </div>

      {/* site watermark */}
      <div className="absolute left-[1254px] top-[704px] z-50 text-white/70 text-[16px] font-bold leading-none whitespace-nowrap pointer-events-none scale-y-[1.3] origin-top [text-shadow:0_0_3px_#999]">173448.COM</div>
    </div>
  );
}
